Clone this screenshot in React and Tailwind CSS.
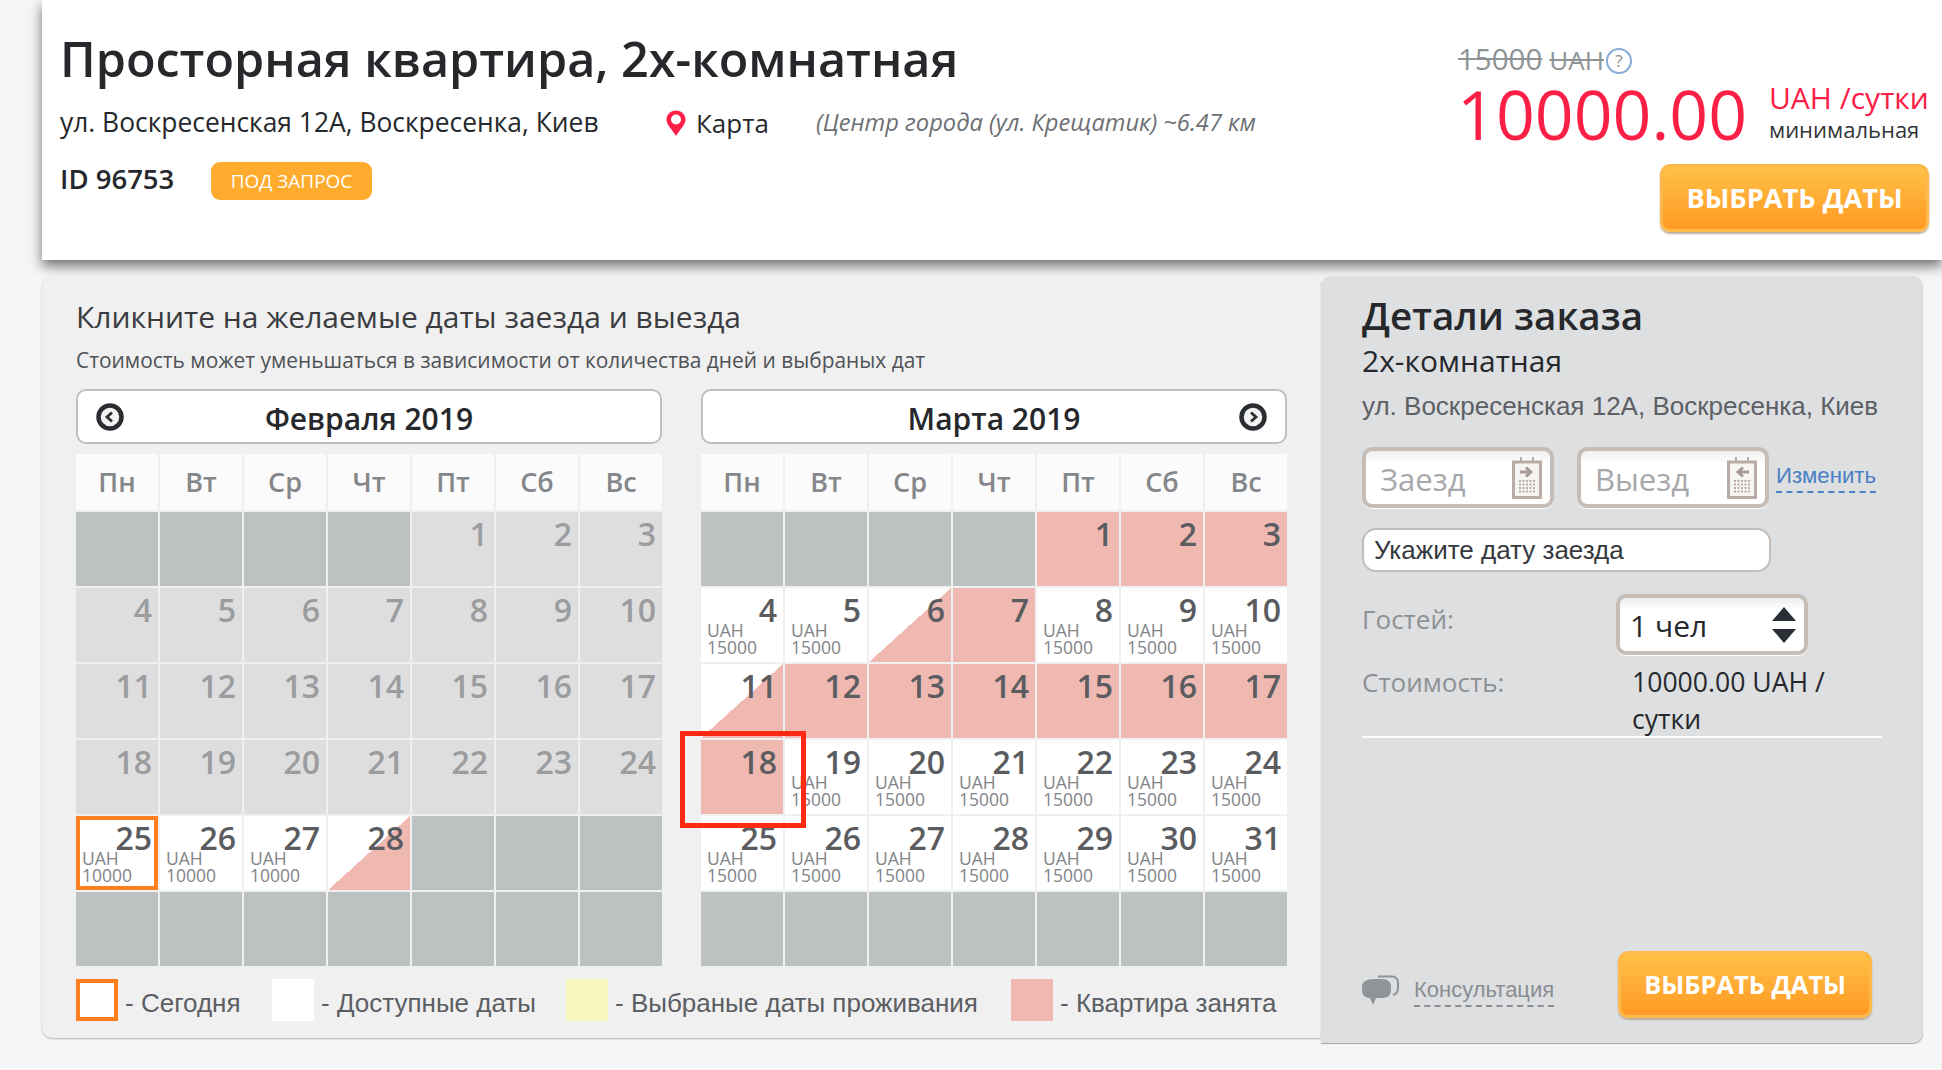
const off = { t: "off" };
const offRow = [off, off, off, off, off, off, off];

function range(from, to, t, price) {
  const out = [];
  for (let d = from; d <= to; d++) out.push({ d, t, price });
  return out;
}

const february = [
  off, off, off, off,
  ...range(1, 24, "past"),
  { d: 25, t: "today", price: 10000 },
  ...range(26, 27, "free", 10000),
  { d: 28, t: "half" },
  off, off, off,
  ...offRow,
];

const march = [
  off, off, off, off,
  ...range(1, 3, "busy"),
  ...range(4, 5, "free", 15000),
  { d: 6, t: "half" },
  { d: 7, t: "busy" },
  ...range(8, 10, "free", 15000),
  { d: 11, t: "half" },
  ...range(12, 18, "busy"),
  ...range(19, 31, "free", 15000),
  ...offRow,
];

const days = ["Пн", "Вт", "Ср", "Чт", "Пт", "Сб", "Вс"];

const cellBg = {
  off: "bg-[#bcc2c2]",
  past: "bg-[#dedede]",
  free: "bg-white",
  today: "bg-white shadow-[inset_0_0_0_4px_#ff7f1f]",
  busy: "bg-[#efb8b0]",
  half: "bg-[linear-gradient(to_bottom_right,#ffffff_50%,#efb8b0_50%)]",
};

function Cell({ cell }) {
  return (
    <div className={`h-[74px] pt-[10px] font-['Open_Sans',sans-serif] ${cellBg[cell.t]}`}>
      {cell.d && (
        <div className={`pr-[6px] text-right text-[32px] leading-[24px] font-semibold ${cell.t === "past" ? "text-[#9b9c9e]" : "text-[#5a5c60]"}`}>
          {cell.d}
        </div>
      )}
      {cell.price && (
        <div className="pl-[6px] text-[17.5px] leading-[17px] text-[#818488]">
          <div>UAH</div>
          <div>{cell.price}</div>
        </div>
      )}
    </div>
  );
}

function ArrowCircle({ dir }) {
  return (
    <svg width="28" height="28" viewBox="0 0 28 28" className="shrink-0">
      <circle cx="14" cy="14" r="11.5" fill="#f2f2f2" stroke="#2a2d31" strokeWidth="4.5" />
      <path d={dir === "left" ? "M16 9.5 L11 14 L16 18.5" : "M12 9.5 L17 14 L12 18.5"} fill="none" stroke="#2a2d31" strokeWidth="2.8" />
    </svg>
  );
}

function Calendar({ title, cells, arrow }) {
  return (
    <div className="w-[586px]">
      <div className="h-[55px] flex items-center px-[18px] bg-white border-2 border-[#c4bdb8] rounded-[10px]">
        {arrow === "left" ? <ArrowCircle dir="left" /> : <div className="w-[28px]" />}
        <div className="flex-1 pt-[3px] text-center text-[30px] font-semibold text-[#26282c] font-['Open_Sans',sans-serif]">{title}</div>
        {arrow === "right" ? <ArrowCircle dir="right" /> : <div className="w-[28px]" />}
      </div>
      <div className="mt-[10px] grid grid-cols-7 gap-[2px]">
        {days.map((d) => (
          <div key={d} className="h-[56px] flex items-center justify-center bg-[#fbfbfb] text-[27px] font-semibold text-[#85878a] font-['Open_Sans',sans-serif]">
            {d}
          </div>
        ))}
        {cells.map((c, i) => (
          <Cell key={i} cell={c} />
        ))}
      </div>
    </div>
  );
}

function DateIcon({ back }) {
  return (
    <svg width="30" height="42" viewBox="0 0 30 42" className="shrink-0">
      <rect x="8" y="0" width="2" height="6" fill="#b8aca6" />
      <rect x="20" y="0" width="2" height="6" fill="#b8aca6" />
      <rect x="1.5" y="5" width="27" height="35.5" fill="#f7f5f4" stroke="#b8aca6" strokeWidth="3" />
      <path d={back ? "M22 15 H12 M16 10.5 L11 15 L16 19.5" : "M8 15 H18 M14 10.5 L19 15 L14 19.5"} fill="none" stroke="#a89a94" strokeWidth="3" />
      <path d="M7 24 H23 M7 27.5 H23 M7 31 H23 M7 34.5 H23" stroke="#b8aca6" strokeWidth="2" strokeDasharray="2 1.5" />
    </svg>
  );
}

function DateInput({ label, back }) {
  return (
    <div className="w-[192px] h-[61px] flex items-center justify-between pl-[14px] pr-[8px] border-4 border-[#c4bdb8] rounded-[10px] bg-[linear-gradient(to_bottom,#eeeeee,#ffffff_12px)] shadow-[0_1px_0_#ffffff]">
      <span className="text-[31px] leading-none mt-[4px] text-[#a6a8ab] font-['Open_Sans',sans-serif]">{label}</span>
      <DateIcon back={back} />
    </div>
  );
}

function OrangeButton({ className }) {
  return (
    <div className={`flex items-center justify-center rounded-[10px] border-[3px] border-[#ffb84a] bg-[linear-gradient(to_bottom,#ffc046,#ff9a24)] shadow-[0_2px_2px_#b9ab98] text-white font-bold font-['Open_Sans',sans-serif] ${className}`}>
      ВЫБРАТЬ ДАТЫ
    </div>
  );
}

function Legend({ box, label, className }) {
  return (
    <div className={`flex items-center ${className}`}>
      <div className={`w-[42px] h-[42px] ${box}`} />
      <span className="ml-[7px] mt-[7px] text-[26px] text-[#5b5e63] font-['Liberation_Sans',sans-serif]">- {label}</span>
    </div>
  );
}

export default function App() {
  return (
    <div className="min-h-[1070px] bg-[#f5f7f6] pl-[42px] pr-[19px] text-[#26282c] font-['Open_Sans',sans-serif] overflow-hidden">
      <header className="-mr-[19px] h-[260px] bg-white shadow-[0_6px_12px_rgba(0,0,0,0.55)] flex justify-between">
        <div className="pl-[18px]">
          <h1 className="mt-[24px] text-[48.5px] leading-[68px] font-semibold text-[#26282c]">Просторная квартира, 2х-комнатная</h1>
          <div className="mt-[13px] flex items-center h-[36px]">
            <span className="w-[606px] text-[26.4px]">ул. Воскресенская 12А, Воскресенка, Киев</span>
            <svg width="20" height="26" viewBox="0 0 20 26">
              <path d="M10 0.5 C4.5 0.5 0.5 4.5 0.5 9.5 C0.5 15 6.5 20 10 26 C13.5 20 19.5 15 19.5 9.5 C19.5 4.5 15.5 0.5 10 0.5 Z" fill="#fc2047" />
              <circle cx="10" cy="9.5" r="5" fill="#ffffff" />
            </svg>
            <span className="ml-[10px] w-[120px] text-[26px]">Карта</span>
            <span className="text-[23.7px] italic text-[#6c7075]">(Центр города (ул. Крещатик) ~6.47 км</span>
          </div>
          <div className="mt-[21px] flex items-center h-[38px]">
            <span className="w-[151px] mb-[4px] text-[27.5px] font-semibold">ID 96753</span>
            <span className="w-[161px] h-[38px] flex items-center justify-center rounded-[9px] bg-[#ffab2e] text-white text-[19px]">ПОД ЗАПРОС</span>
          </div>
        </div>
        <div className="w-[485px] pr-[13px]">
          <div className="mt-[40px] h-[38px] flex items-center text-[#8e9396]">
            <span className="ml-[1px] text-[29.5px] line-through">15000</span>
            <span className="ml-[7px] mt-[2px] text-[26px] line-through">UAH</span>
            <span className="ml-[2px] mt-[3px] w-[26px] h-[26px] rounded-full border-2 border-[#85acd6] flex items-center justify-center text-[17px] text-[#8e9396]">?</span>
          </div>
          <div className="flex -mt-[5px]">
            <div className="text-[68px] leading-[82px] text-[#fc2047] w-[312px]">10000.00</div>
            <div>
              <div className="mt-[7px] text-[30px] leading-[36px] text-[#fc2047] whitespace-nowrap">UAH /сутки</div>
              <div className="text-[22px] leading-[27px] text-[#333639]">минимальная</div>
            </div>
          </div>
          <div className="flex justify-end mt-[9px]">
            <OrangeButton className="w-[269px] h-[68px] text-[27.2px]" />
          </div>
        </div>
      </header>

      <main className="mt-[16px] flex items-start">
        <section className="w-[1279px] h-[762px] px-[34px] bg-[#f0f0f0] rounded-t-[10px] rounded-bl-[10px] shadow-[0_1px_2px_#b5b0ac]">
          <h2 className="pt-[22px] text-[30px] leading-[38px] text-[#3a3c40]">Кликните на желаемые даты заезда и выезда</h2>
          <p className="mt-[10px] text-[20.9px] leading-[28px] text-[#4f5256]">Стоимость может уменьшаться в зависимости от количества дней и выбраных дат</p>
          <div className="mt-[15px] flex gap-[39px]">
            <Calendar title="Февраля 2019" cells={february} arrow="left" />
            <div className="relative">
              <Calendar title="Марта 2019" cells={march} arrow="right" />
              <div className="absolute left-[-21px] top-[342px] w-[126px] h-[97px] border-[5px] border-[#ff2a12]" />
            </div>
          </div>
          <div className="mt-[11px] flex">
            <Legend box="bg-white border-[4px] border-[#ff7f1f]" label="Сегодня" className="w-[196px]" />
            <Legend box="bg-white" label="Доступные даты" className="w-[294px]" />
            <Legend box="bg-[#f9f8bc]" label="Выбраные даты проживания" className="w-[445px]" />
            <Legend box="bg-[#efb8b0]" label="Квартира занята" />
          </div>
        </section>

        <aside className="w-[602px] h-[767px] pl-[41px] bg-[#dddfe1] rounded-t-[10px] rounded-br-[10px] shadow-[0_1px_1px_#a8a29d] flex flex-col">
          <h2 className="mt-[14px] text-[38.6px] leading-[50px] font-semibold text-[#26282c]">Детали заказа</h2>
          <div className="mt-[1px] text-[30px] leading-[40px] text-[#26282c]">2х-комнатная</div>
          <div className="mt-[8px] text-[26px] leading-[34px] text-[#5d6065] font-['Liberation_Sans',sans-serif]">ул. Воскресенская 12А, Воскресенка, Киев</div>
          <div className="mt-[24px] flex items-start">
            <DateInput label="Заезд" />
            <div className="ml-[23px]"><DateInput label="Выезд" back /></div>
            <a className="ml-[7px] mt-[15px] pb-[1px] text-[22.2px] leading-[28px] text-[#4a80c4] border-b-2 border-dashed border-[#4a80c4] font-['Liberation_Sans',sans-serif]">Изменить</a>
          </div>
          <div className="mt-[20px] w-[409px] h-[44px] flex items-center pl-[10px] bg-white border-2 border-[#c4bdb8] rounded-[14px] text-[26px] text-[#36393d] font-['Liberation_Sans',sans-serif]">Укажите дату заезда</div>
          <div className="mt-[22px] flex items-start">
            <span className="w-[254px] pt-[7px] text-[26px] leading-[36px] text-[#8e9194]">Гостей:</span>
            <div className="w-[192px] h-[61px] flex items-center justify-between pl-[10px] pr-[8px] border-4 border-[#c4bdb8] rounded-[10px] bg-[linear-gradient(to_bottom,#eeeeee,#ffffff_12px)] shadow-[0_1px_0_#ffffff]">
              <span className="text-[30px] mt-[2px] text-[#26282c]">1 чел</span>
              <svg width="24" height="36" viewBox="0 0 24 36">
                <path d="M12 0 L24 14 H0 Z M12 36 L0 22 H24 Z" fill="#2a2e35" />
              </svg>
            </div>
          </div>
          <div className="mt-[9px] flex items-start">
            <span className="w-[270px] text-[26px] leading-[37px] text-[#8e9194]">Стоимость:</span>
            <span className="w-[225px] text-[26.6px] leading-[37px] text-[#26282c]">10000.00 UAH / сутки</span>
          </div>
          <div className="w-[520px] h-[2px] -mt-[2px] bg-white" />
          <div className="mt-[213px] flex items-start">
            <svg width="37" height="30" viewBox="0 0 37 30" className="mt-[24px] shrink-0">
              <path d="M16 1.5 H30 C34 1.5 36 4.5 36 8 V13 C36 17 34 19 31 20" fill="none" stroke="#8f9497" strokeWidth="2" />
              <path d="M12 4 H20 C26 4 29 7 29 12 V15 C29 20 26 23 20 23 H14 L11 30 L8 23 C3 23 0 20 0 15 V12 C0 7 4 4 12 4 Z" fill="#8f9497" />
            </svg>
            <a className="ml-[15px] mt-[25px] pb-[1px] text-[22px] leading-[28px] text-[#8a8d91] border-b-2 border-dashed border-[#8a8d91] font-['Liberation_Sans',sans-serif]">Консультация</a>
            <OrangeButton className="ml-[64px] w-[254px] h-[67px] text-[25.4px]" />
          </div>
        </aside>
      </main>
    </div>
  );
}
